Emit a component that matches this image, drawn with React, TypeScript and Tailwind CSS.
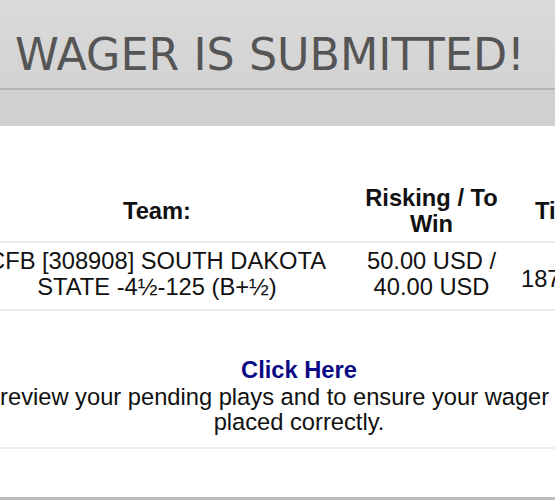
const sans = "font-['Liberation_Sans',Arial,sans-serif]";

const HeaderCell = ({ children, className = '' }: { children: React.ReactNode; className?: string }) => (
  <div className={`flex items-center justify-center px-2 py-1 text-center font-bold ${className}`}>{children}</div>
);

export default function App() {
  return (
    <div className="w-[555px] h-[500px] overflow-hidden bg-white">
      <div className={`w-[874px] -ml-[140px] flex flex-col text-[#111111] ${sans}`}>
        {/* banner */}
        <div className="h-[88px] bg-gradient-to-b from-[#dadada] to-[#d3d3d3] pt-[29px] pl-[18px]">
          <h1 className="whitespace-nowrap font-['DejaVu_Sans',sans-serif] text-[44.4px] leading-[51px] font-normal text-[#555555]">
            YOUR WAGER IS SUBMITTED!
          </h1>
        </div>
        <div className="h-[2px] bg-[#b3b3b3]" />
        <div className="h-[36px] bg-[#d0d0d0]" />

        {/* ticket table */}
        <div className="pt-[56px] text-[23.7px] leading-[25.5px]">
          <div className="ml-[104px] grid grid-cols-[386px_163px_1fr] border-b-2 border-[#ececec]">
            <HeaderCell>Team:</HeaderCell>
            <HeaderCell>Risking / To Win</HeaderCell>
            <div className="flex items-center pl-[22px] pr-2 py-1 font-bold whitespace-nowrap">Ticket #:</div>
          </div>
          <div className="ml-[104px] grid grid-cols-[386px_163px_1fr] border-b-2 border-[#ececec]">
            <div className="px-2 pt-[6px] pb-[9px] text-center">CFB [308908] SOUTH DAKOTA STATE -4½-125 (B+½)</div>
            <div className="px-2 pt-[6px] pb-[9px] text-center">50.00 USD / 40.00 USD</div>
            <div className="flex items-center px-2 pt-[13px] pb-[6px] whitespace-nowrap">187459302</div>
          </div>
        </div>

        {/* pending plays note */}
        <div className="mt-[47px] pb-[11px] border-b-2 border-[#ececec] text-[23.7px] leading-[25.5px]">
          <div className="ml-[129px] w-[620px] text-center">
            <a href="#" className="block font-bold text-[#0a0a86]">
              Click Here
            </a>
            <p className="mt-[1px]">review your pending plays and to ensure your wager was placed correctly.</p>
          </div>
        </div>

        <div className="h-[48px]" />
        <div className="h-[8px] bg-[#bcbcbc]" />
      </div>
    </div>
  );
}
